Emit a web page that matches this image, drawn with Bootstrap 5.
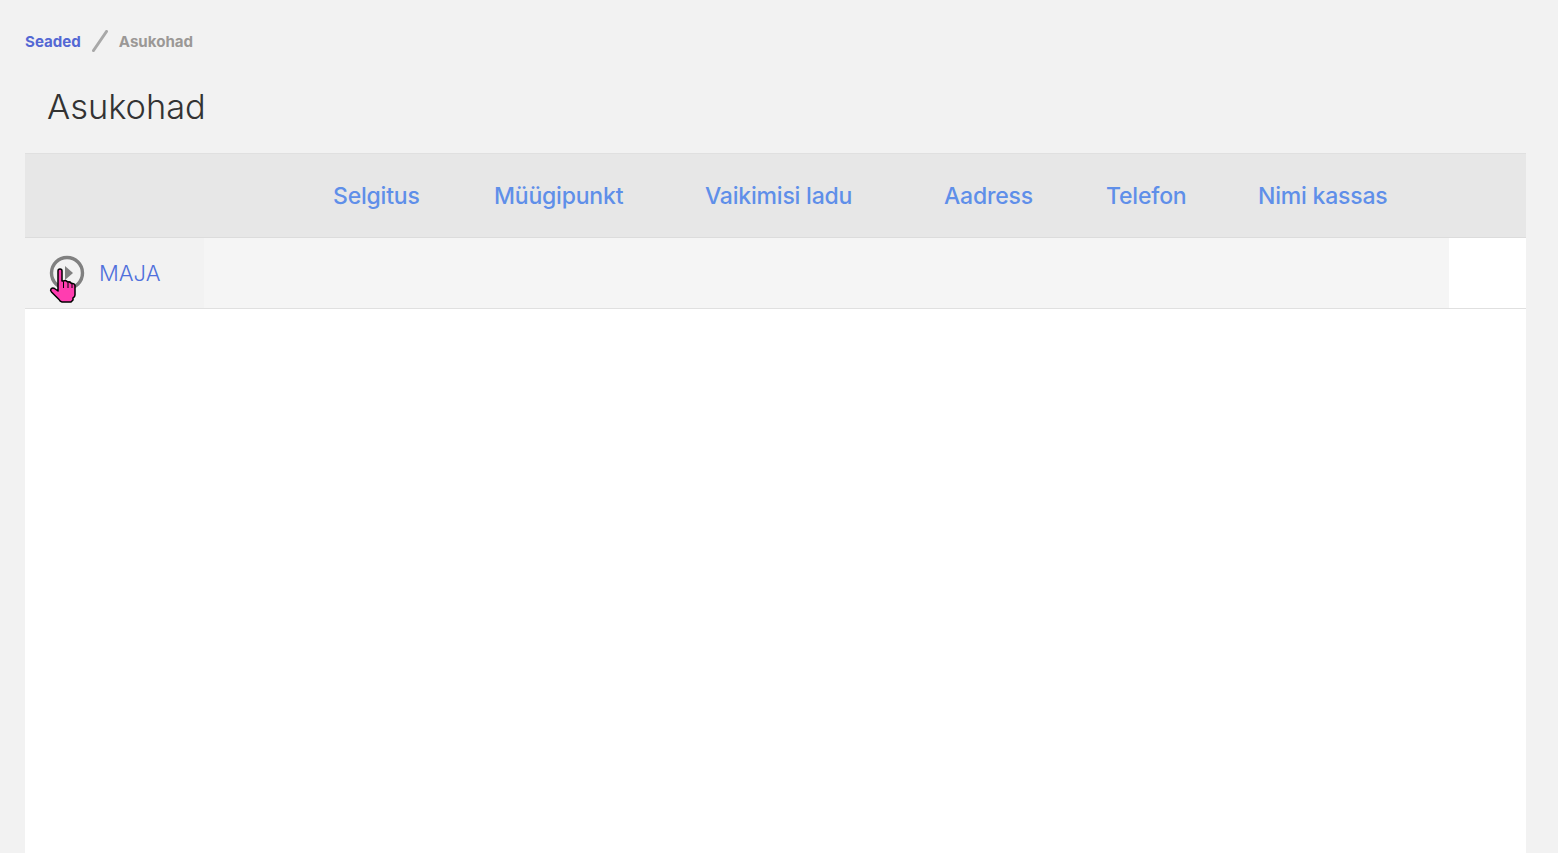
<!DOCTYPE html>
<html lang="et">
<head>
  <meta charset="UTF-8">
  <title>Asukohad</title>
  <link href="https://cdn.jsdelivr.net/npm/bootstrap@5.3.2/dist/css/bootstrap.min.css" rel="stylesheet">
  <style>
    body {
      background-color: #f2f2f2;
      font-family: "Inter", "Noto Sans", "Liberation Sans", sans-serif;
      overflow: hidden;
    }
    .page-wrap {
      height: 853px;
      padding: 0 32px 0 25px;
    }
    .crumbs {
      height: 82px;
      padding-top: 32px;
      font-size: 15.1px;
      line-height: 20px;
      font-weight: 700;
    }
    .crumbs a {
      color: #5468d4;
      text-decoration: none;
    }
    .crumbs .crumb-now {
      color: #9b9896;
    }
    .crumb-sep {
      width: 16px;
      height: 22px;
      margin: -2px 11px 0 11px;
    }
    .page-title {
      height: 71px;
      margin: 0;
      padding: 5px 0 0 22px;
      font-size: 34.4px;
      line-height: 40px;
      font-weight: 300;
      color: #333;
    }
    .sheet {
      background-color: #fff;
    }
    .loc-table {
      width: 1501px;
      table-layout: fixed;
      border-collapse: collapse;
    }
    .loc-table thead th {
      height: 84px;
      background-color: #e7e7e7;
      border-top: 1px solid #e0e0e0;
      border-bottom: 1px solid #dcdcdc;
      padding: 2px 0 0 0;
      font-size: 23px;
      font-weight: 500;
      letter-spacing: -0.2px;
      color: #5f8fe9;
      vertical-align: middle;
    }
    .loc-table tbody td {
      height: 71px;
      padding: 0;
      border-bottom: 1px solid #e0e0e0;
      vertical-align: middle;
    }
    .loc-table tbody td.cell-name {
      background-color: #f2f2f2;
      position: relative;
      padding: 0 0 0 74px;
      font-size: 22px;
      font-weight: 300;
      color: #4f70dc;
    }
    .cell-fill {
      background-color: #f5f5f5;
    }
    .ring-icon {
      position: absolute;
      left: 24px;
      top: 17px;
      width: 36px;
      height: 36px;
    }
    .hand-cursor {
      position: absolute;
      left: 24px;
      top: 30px;
      width: 30px;
      height: 36px;
    }
  </style>
</head>
<body>

<div class="page-wrap d-flex flex-column">
  <nav class="crumbs d-flex align-items-start" aria-label="breadcrumb">
    <a href="#">Seaded</a>
    <svg class="crumb-sep" viewBox="0 0 16 22"><line x1="1.5" y1="20.5" x2="14.5" y2="1.5" stroke="#a8a8a8" stroke-width="3" stroke-linecap="round"/></svg>
    <span class="crumb-now">Asukohad</span>
  </nav>
  <h1 class="page-title">Asukohad</h1>

  <div class="sheet flex-grow-1">
    <table class="loc-table">
      <colgroup>
        <col style="width:179px"><col style="width:129px"><col style="width:161px"><col style="width:211px">
        <col style="width:239px"><col style="width:162px"><col style="width:152px"><col style="width:191px"><col style="width:77px">
      </colgroup>
      <thead>
        <tr>
          <th></th>
          <th></th>
          <th>Selgitus</th>
          <th>Müügipunkt</th>
          <th>Vaikimisi ladu</th>
          <th>Aadress</th>
          <th>Telefon</th>
          <th>Nimi kassas</th>
          <th></th>
        </tr>
      </thead>
      <tbody>
        <tr>
          <td class="cell-name">
            <svg class="ring-icon" viewBox="0 0 36 36">
              <circle cx="18" cy="18" r="15.5" fill="none" stroke="#808080" stroke-width="3.4"/>
              <path d="M16 11 L24 18 L16 25 Z" fill="#808080"/>
            </svg>
            MAJA
            <svg class="hand-cursor" viewBox="0 0 30 36">
              <path d="M9 3 Q9 1 11 1 Q13 1 13 3 V13 H14.500 Q16.500 12 18 13.500 L19 14 Q21 13.500 22 15 L23 15.500 Q25.500 15 26 17.500 V27 Q26 29 24 30 V32 L22 34 H13 Q11 33.500 10 31.500 L2.500 24 Q1 22.500 2 21 Q3.500 19.500 5.500 20.500 L9 23 Z" fill="#ff3db0" stroke="#000" stroke-width="1.500" stroke-linejoin="round"/>
              <path d="M14.500 13.500 V20 M19 14.500 V20 M23 16 V20" fill="none" stroke="#000" stroke-width="1"/>
            </svg>
          </td>
          <td class="cell-fill" colspan="7"></td>
          <td></td>
        </tr>
      </tbody>
    </table>
  </div>
</div>

<script src="https://cdn.jsdelivr.net/npm/bootstrap@5.3.2/dist/js/bootstrap.bundle.min.js"></script>
</body>
</html>
